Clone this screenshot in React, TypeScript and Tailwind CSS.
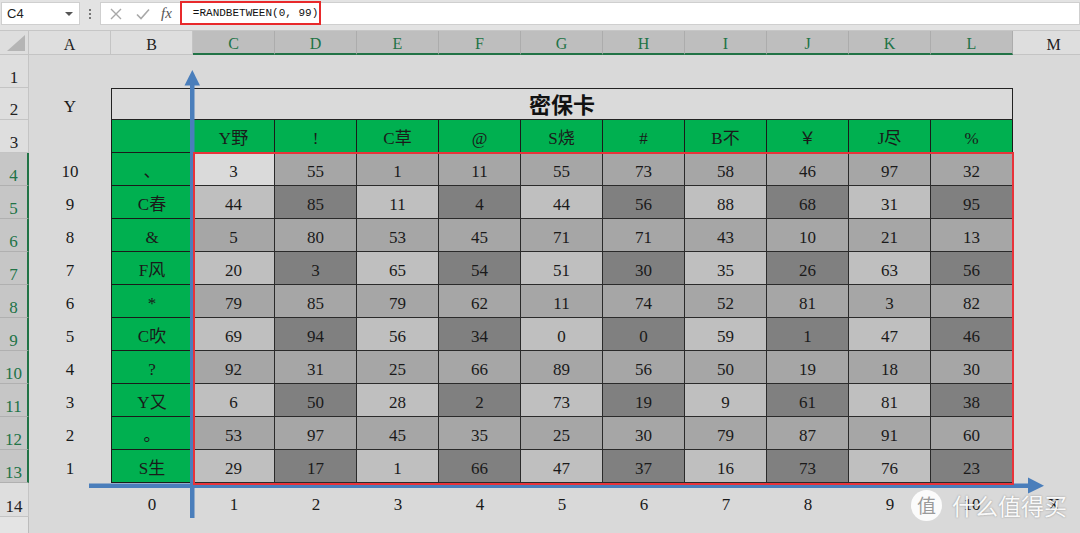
import React from "react";

const COLS = ["A", "B", "C", "D", "E", "F", "G", "H", "I", "J", "K", "L", "M"];
const HEAD3 = ["Y野", "!", "C草", "@", "S烧", "#", "B不", "￥", "J尽", "%"];
const ROWB = ["、", "C春", "&", "F风", "*", "C吹", "?", "Y又", "。", "S生"];
const DATA = [
  [3, 55, 1, 11, 55, 73, 58, 46, 97, 32],
  [44, 85, 11, 4, 44, 56, 88, 68, 31, 95],
  [5, 80, 53, 45, 71, 71, 43, 10, 21, 13],
  [20, 3, 65, 54, 51, 30, 35, 26, 63, 56],
  [79, 85, 79, 62, 11, 74, 52, 81, 3, 82],
  [69, 94, 56, 34, 0, 0, 59, 1, 47, 46],
  [92, 31, 25, 66, 89, 56, 50, 19, 18, 30],
  [6, 50, 28, 2, 73, 19, 9, 61, 81, 38],
  [53, 97, 45, 35, 25, 30, 79, 87, 91, 60],
  [29, 17, 1, 66, 47, 37, 16, 73, 76, 23],
];

const serif = { fontFamily: '"Liberation Serif", "Noto Sans CJK SC", serif' };

function cellBg(r: number, c: number) {
  if (r === 0 && c === 0) return "bg-[#dadada]";
  if (r % 2 === 0) return "bg-[#a6a6a6]";
  return c % 2 === 0 ? "bg-[#bfbfbf]" : "bg-[#808080]";
}

export default function App() {
  const rowHeights = [33, 32, 33, 33, 33, 33, 33, 33, 33, 33, 33, 33, 33, 34, 20];
  const cells: React.ReactNode[] = [];

  cells.push(
    <div key="corner" className="relative bg-[#dedede] border-r border-b border-[#c4c4c4]">
      <div className="absolute right-[3px] bottom-[3px] w-0 h-0 border-l-[18px] border-l-transparent border-b-[16px] border-b-[#b5b5b5]" />
    </div>
  );
  COLS.forEach((c, i) => {
    const hl = i >= 2 && i <= 11;
    cells.push(
      <div
        key={"h" + c}
        className={
          "flex items-center justify-center pt-[4px] text-[16px] " +
          (hl
            ? "bg-[#bebebe] text-[#217346] border-r border-[#acacac] border-b-2 border-b-[#217346]"
            : "bg-[#dedede] text-[#222] border-r border-b border-[#c4c4c4]")
        }
        style={serif}
      >
        {c}
      </div>
    );
  });

  for (let r = 1; r <= 15; r++) {
    const hl = r >= 4 && r <= 13;
    cells.push(
      <div
        key={"r" + r}
        className={
          "flex items-end justify-center leading-[18px] text-[17px] " +
          (hl
            ? "bg-[#c6c6c6] text-[#217346] border-b border-[#b0b0b0] border-r-2 border-r-[#217346]"
            : r === 15
            ? "bg-[#e4e4e4] border-r border-[#bcbcbc]"
            : "bg-[#dedede] text-[#222] border-r border-b border-[#c4c4c4]")
        }
        style={serif}
      >
        {r <= 14 ? r : ""}
      </div>
    );
    for (let c = 0; c < 13; c++) {
      const key = `c${r}-${c}`;
      const base = "flex items-center justify-center pt-[5px] text-[17px] text-[#1a1a1a]";
      if (r === 2) {
        if (c === 0) {
          cells.push(
            <div key={key} className={base} style={serif}>
              Y
            </div>
          );
        } else if (c === 1) {
          cells.push(
            <div
              key={key}
              className="col-span-11 flex items-center justify-center border border-[#222] bg-[#dadada] pt-[2px] text-[22px] font-bold text-[#111]"
              style={serif}
            >
              密保卡
            </div>
          );
        } else if (c === 12) {
          cells.push(<div key={key} />);
        }
        continue;
      }
      if (r === 3 && c >= 1 && c <= 11) {
        cells.push(
          <div
            key={key}
            className={
              base +
              " bg-[#00b050] border-r border-b border-[#1a1a1a]" +
              (c === 1 ? " border-l" : "")
            }
            style={serif}
          >
            {c >= 2 ? HEAD3[c - 2] : ""}
          </div>
        );
        continue;
      }
      if (hl && c === 0) {
        cells.push(
          <div key={key} className={base} style={serif}>
            {14 - r}
          </div>
        );
        continue;
      }
      if (hl && c === 1) {
        cells.push(
          <div
            key={key}
            className={base + " bg-[#00b050] border-l border-r border-b border-[#1a1a1a]"}
            style={serif}
          >
            {ROWB[r - 4]}
          </div>
        );
        continue;
      }
      if (hl && c >= 2 && c <= 11) {
        cells.push(
          <div
            key={key}
            className={base + " border-r border-b border-[#2a2a2a] " + cellBg(r - 4, c - 2)}
            style={serif}
          >
            {DATA[r - 4][c - 2]}
          </div>
        );
        continue;
      }
      if (r === 14 && c >= 1) {
        cells.push(
          <div key={key} className={base + " items-start pt-[9px]"} style={serif}>
            {c === 12 ? "X" : c - 1}
          </div>
        );
        continue;
      }
      cells.push(<div key={key} />);
    }
  }

  return (
    <div className="relative w-[1080px] h-[533px] overflow-hidden bg-[#d9d9d9]">
      {/* toolbar */}
      <div className="flex h-[31px] items-start bg-[#e3e3e3] border-b border-[#c6c6c6] pt-[2px]">
        <div className="ml-[1px] flex h-[23px] w-[79px] shrink-0 items-center justify-between border border-[#cfcfcf] bg-white pl-[5px] pr-[6px]">
          <span className="text-[13px] text-[#222]" style={{ fontFamily: '"Liberation Sans", sans-serif' }}>
            C4
          </span>
          <span className="h-0 w-0 border-l-[4px] border-r-[4px] border-t-[4px] border-l-transparent border-r-transparent border-t-[#555]" />
        </div>
        <div className="flex h-[23px] w-[20px] shrink-0 flex-col items-center justify-center gap-[2px]">
          <span className="h-[2px] w-[2px] bg-[#777]" />
          <span className="h-[2px] w-[2px] bg-[#777]" />
          <span className="h-[2px] w-[2px] bg-[#777]" />
        </div>
        <div className="flex h-[23px] flex-1 items-center border border-[#cfcfcf] bg-white">
          <svg width="14" height="14" viewBox="0 0 14 14" className="ml-[8px] shrink-0">
            <path d="M2 2 L12 12 M12 2 L2 12" stroke="#a8a8a8" strokeWidth="1.4" />
          </svg>
          <svg width="16" height="14" viewBox="0 0 16 14" className="ml-[12px] shrink-0">
            <path d="M2 7.5 L6 11.5 L14 2.5" stroke="#a8a8a8" strokeWidth="1.6" fill="none" />
          </svg>
          <span
            className="ml-[10px] text-[15px] italic text-[#555]"
            style={{ fontFamily: '"Liberation Serif", serif' }}
          >
            fx
          </span>
          <div className="ml-[8px] -mt-[1px] flex h-[24px] w-[141px] shrink-0 items-center overflow-hidden whitespace-nowrap border-2 border-[#e8292b] pl-[11px]">
            <span className="whitespace-nowrap text-[11px] text-[#111]" style={{ fontFamily: '"Liberation Mono", monospace' }}>
              =RANDBETWEEN(0, 99)
            </span>
          </div>
        </div>
      </div>

      {/* sheet grid */}
      <div
        className="grid w-[1095px] grid-cols-[29px_repeat(13,82px)]"
        style={{ gridTemplateRows: "24px " + rowHeights.map((h) => h + "px").join(" ") }}
      >
        {cells}
      </div>

      {/* axis arrows */}
      <svg className="pointer-events-none absolute left-0 top-0" width="1080" height="533" viewBox="0 0 1080 533">
        <rect x="190" y="84" width="4.5" height="434" fill="#4a7ebb" />
        <polygon points="184.5,85.5 200,85.5 192.3,70" fill="#4a7ebb" />
        <rect x="89" y="483.5" width="941" height="4.5" fill="#4a7ebb" />
        <polygon points="1028,477.5 1028,493.5 1044,485.7" fill="#4a7ebb" />
      </svg>

      {/* selection red frame */}
      <div className="pointer-events-none absolute left-[193px] top-[152px] h-[333px] w-[821px] border-2 border-[#e8333a]" />

      {/* watermark */}
      <div className="pointer-events-none absolute left-[911px] top-[490px] flex items-center gap-[10px]">
        <div
          className="flex h-[31px] w-[31px] items-center justify-center rounded-full bg-white/90 text-[19px] text-[#9a9a9a]"
          style={{ fontFamily: '"Noto Sans CJK SC", sans-serif' }}
        >
          值
        </div>
        <span
          className="text-[23px] leading-none text-white/95 [text-shadow:0_0_2px_rgba(0,0,0,0.35)]"
          style={{ fontFamily: '"Noto Sans CJK SC", sans-serif' }}
        >
          什么值得买
        </span>
      </div>
    </div>
  );
}
